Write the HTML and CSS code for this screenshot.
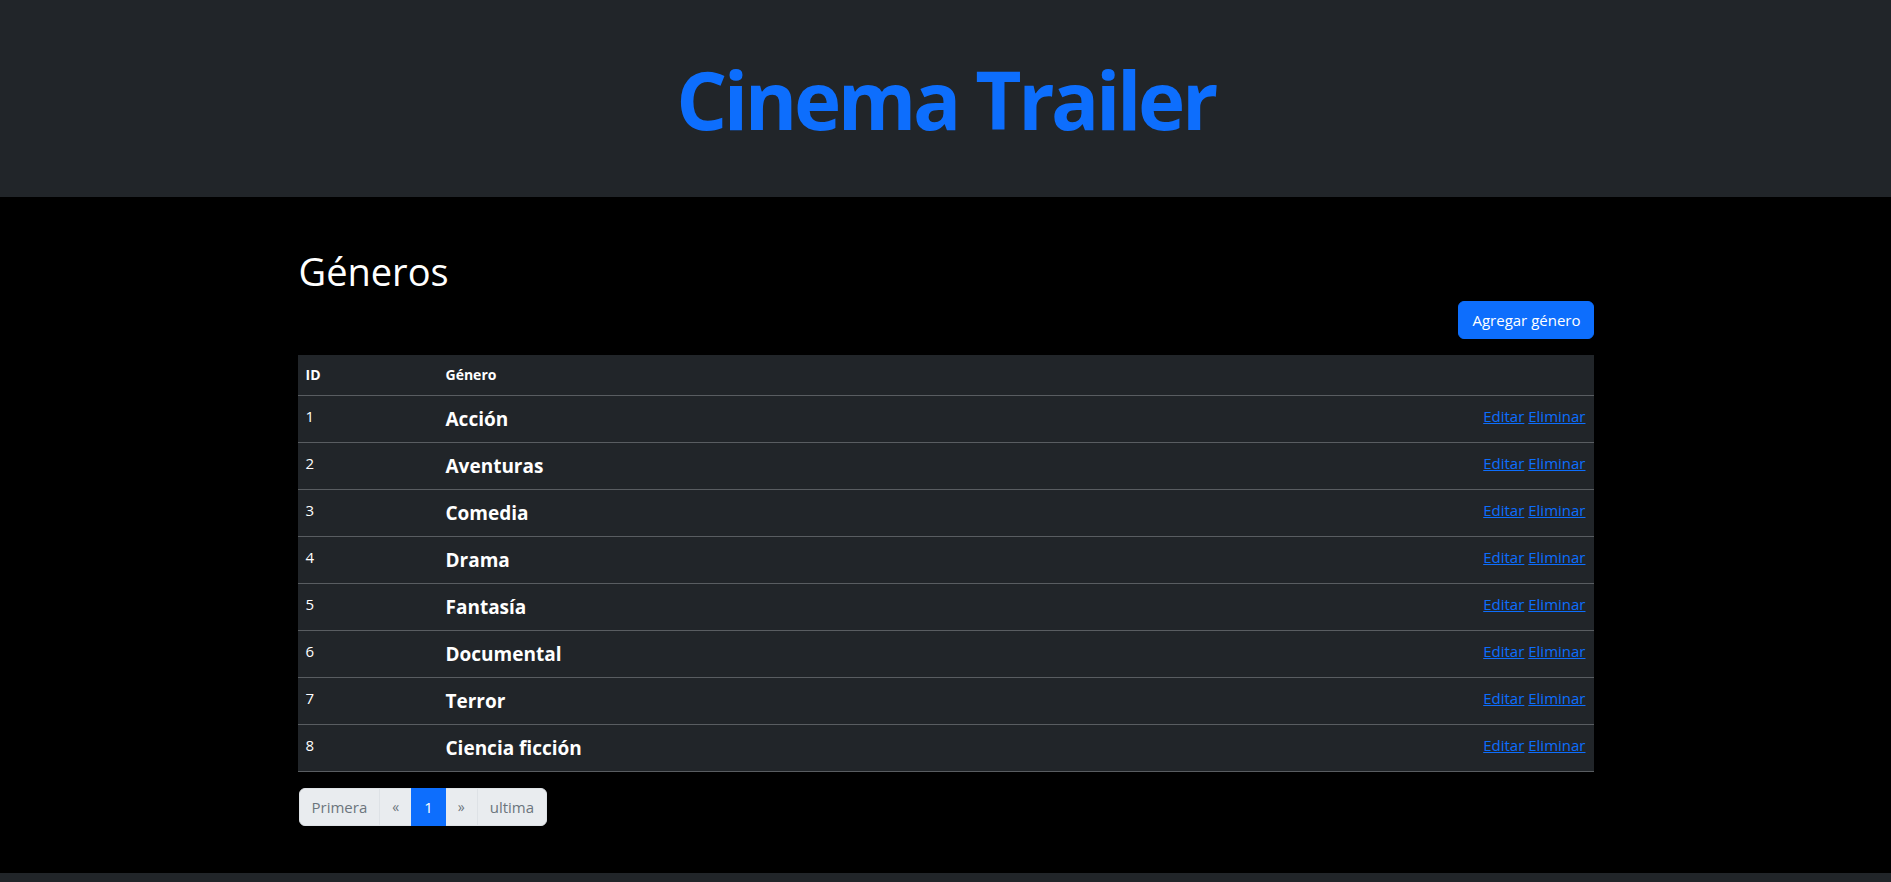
FILE: index.html
```html
<!DOCTYPE html>
<html lang="es">
<head>
<meta charset="utf-8">
<title>Cinema Trailer - Géneros</title>
<link rel="stylesheet" href="styles.css">
</head>
<body>
<header class="site-header">
  <h1 class="brand">Cinema Trailer</h1>
</header>
<main class="main">
  <div class="container">
    <h1 class="page-title">Géneros</h1>
    <div class="actions">
      <a class="btn-primary" href="#">Agregar género</a>
    </div>
    <table class="genres">
      <thead>
        <tr><th class="col-id">ID</th><th class="col-name">Género</th><th class="col-actions"></th></tr>
      </thead>
      <tbody>
        <tr><td class="col-id">1</td><td class="col-name"><span class="genre">Acción</span></td><td class="col-actions"><a href="#">Editar</a> <a href="#">Eliminar</a></td></tr>
        <tr><td class="col-id">2</td><td class="col-name"><span class="genre">Aventuras</span></td><td class="col-actions"><a href="#">Editar</a> <a href="#">Eliminar</a></td></tr>
        <tr><td class="col-id">3</td><td class="col-name"><span class="genre">Comedia</span></td><td class="col-actions"><a href="#">Editar</a> <a href="#">Eliminar</a></td></tr>
        <tr><td class="col-id">4</td><td class="col-name"><span class="genre">Drama</span></td><td class="col-actions"><a href="#">Editar</a> <a href="#">Eliminar</a></td></tr>
        <tr><td class="col-id">5</td><td class="col-name"><span class="genre">Fantasía</span></td><td class="col-actions"><a href="#">Editar</a> <a href="#">Eliminar</a></td></tr>
        <tr><td class="col-id">6</td><td class="col-name"><span class="genre">Documental</span></td><td class="col-actions"><a href="#">Editar</a> <a href="#">Eliminar</a></td></tr>
        <tr><td class="col-id">7</td><td class="col-name"><span class="genre">Terror</span></td><td class="col-actions"><a href="#">Editar</a> <a href="#">Eliminar</a></td></tr>
        <tr><td class="col-id">8</td><td class="col-name"><span class="genre">Ciencia ficción</span></td><td class="col-actions"><a href="#">Editar</a> <a href="#">Eliminar</a></td></tr>
      </tbody>
    </table>
    <nav class="pager">
      <ul class="pagination">
        <li class="page-item"><span class="page-link">Primera</span></li>
        <li class="page-item"><span class="page-link small">«</span></li>
        <li class="page-item active"><span class="page-link">1</span></li>
        <li class="page-item"><span class="page-link small">»</span></li>
        <li class="page-item"><span class="page-link">ultima</span></li>
      </ul>
    </nav>
  </div>
</main>
<footer class="site-footer"></footer>
</body>
</html>
```
FILE: styles.css
```css
* { box-sizing: border-box; }
html, body {
  margin: 0;
  padding: 0;
}
body {
  background: #000;
  color: #fff;
  font-family: "Open Sans", "Noto Sans", sans-serif;
  font-size: 15px;
  line-height: 24px;
}
.site-header {
  background: #212529;
  height: 197px;
  display: flex;
  align-items: center;
  justify-content: center;
}
.brand {
  margin: 0;
  color: #0d6efd;
  font-size: 80px;
  font-weight: 700;
  line-height: 1.2;
  letter-spacing: -3.4px;
}
.main {
  padding: 50px 0 47px;
}
.container {
  width: 1296px;
  margin: 0 auto;
}
.page-title {
  margin: 0 0 6px 1px;
  font-size: 38px;
  font-weight: 500;
  line-height: 48px;
}
.actions {
  display: flex;
  justify-content: flex-end;
  margin-bottom: 16px;
}
.btn-primary {
  display: inline-block;
  background: #0d6efd;
  color: #fff;
  text-decoration: none;
  border: 1px solid #0d6efd;
  border-radius: 6px;
  padding: 6px 12px 6px 13px;
  line-height: 24px;
  font-size: 15px;
}
.genres {
  width: 100%;
  border-collapse: collapse;
  background: #212529;
  margin-bottom: 16px;
}
.genres th, .genres td {
  padding: 8px;
  text-align: left;
  vertical-align: top;
  border-bottom: 1px solid #595d61;
}
.genres th {
  font-size: 14px;
  font-weight: 700;
  line-height: 24px;
}
.genres .col-id { width: 140px; }
.genres .col-actions { text-align: right; white-space: nowrap; }
.genre {
  font-size: 19px;
  font-weight: 700;
  line-height: 30px;
  display: block;
}
.genres a {
  color: #0d6efd;
  text-decoration: underline;
}
.pager { display: flex; margin-left: 1px; }
.pagination {
  display: flex;
  list-style: none;
  margin: 0;
  padding: 0;
}
.page-link {
  display: block;
  padding: 6px 12px;
  line-height: 24px;
  font-size: 15px;
  background: #e9ecef;
  color: #6c757d;
  border: 1px solid #dee2e6;
  margin-left: -1px;
}
.page-link.small { font-size: 14px; padding: 6px 12px; }
.page-item:first-child .page-link {
  margin-left: 0;
  border-radius: 6px 0 0 6px;
}
.page-item:last-child .page-link {
  border-radius: 0 6px 6px 0;
}
.page-item.active .page-link {
  background: #0d6efd;
  border-color: #0d6efd;
  color: #fff;
  position: relative;
  z-index: 1;
}
.site-footer {
  background: #212529;
  height: 9px;
}
```
